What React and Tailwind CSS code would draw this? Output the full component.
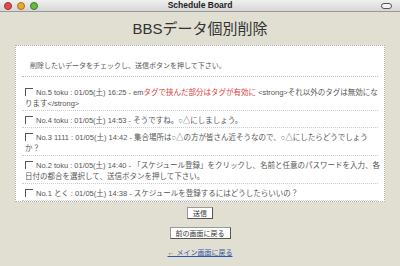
import React from 'react';

const posts = [
  {
    id: 5,
    lines: [
      <>
        No.5 toku : 01/05(土) 16:25 - em<span className="text-[#e03c3c]">タグで挟んだ部分はタグが有効に</span> &lt;strong&gt;それ以外のタグは無効にな
      </>,
      <>ります&lt;/strong&gt;</>,
    ],
  },
  { id: 4, lines: [<>No.4 toku : 01/05(土) 14:53 - そうですね。○△にしましょう。</>] },
  {
    id: 3,
    lines: [
      <>No.3 1111 : 01/05(土) 14:42 - 集合場所は○△の方が皆さん近そうなので、○△にしたらどうでしょう</>,
      <>か？</>,
    ],
  },
  {
    id: 2,
    lines: [
      <>No.2 toku : 01/05(土) 14:40 - 「スケジュール登録」をクリックし、名前と任意のパスワードを入力、各</>,
      <>日付の都合を選択して、送信ボタンを押して下さい。</>,
    ],
  },
  { id: 1, lines: [<>No.1 とく : 01/05(土) 14:38 - スケジュールを登録するにはどうしたらいいの？</>] },
];

const Checkbox = () => (
  <span className="inline-block w-[8px] h-[8px] mr-[3px] align-[-1px] border-t border-l border-[#555]" />
);

const TitleBar = () => (
  <div className="relative h-[12px] flex items-center justify-center bg-[linear-gradient(#f0f0f0,#d6d6d6)] border-b border-[#999]">
    <div className="absolute left-[4px] top-[2px] flex gap-[5px]">
      <span className="w-[8px] h-[8px] rounded-full bg-[#e24b4b] border border-[#933]" />
      <span className="w-[8px] h-[8px] rounded-full bg-[#eda53a] border border-[#a8701a]" />
      <span className="w-[8px] h-[8px] rounded-full bg-[#6cb845] border border-[#3f7a26]" />
    </div>
    <span className="text-[8.5px] font-bold text-[#222] leading-none">Schedule Board</span>
    <span className="absolute right-[8px] top-[3px] w-[11px] h-[6px] rounded-full border border-[#555] bg-[#f2f2f2]" />
  </div>
);

export default function App() {
  return (
    <div
      className="w-[400px] h-[266px] bg-[#e0dfd1] overflow-hidden text-[#555]"
      style={{ fontFamily: '"Liberation Sans", "Noto Sans CJK JP", sans-serif' }}
    >
      <TitleBar />
      <h1 className="h-[33px] flex items-center justify-center text-[15px] text-[#333] leading-none pb-[1px]">
        BBSデータ個別削除
      </h1>

      <div className="mx-[15px] bg-white border border-dotted border-[#aaa] px-[6px]">
        <div className="pt-[14px] pb-[4px] pl-[8px] text-[7px] leading-[12px] border-b border-dotted border-[#bbb]">
          削除したいデータをチェックし、送信ボタンを押して下さい。
        </div>
        <div className="pt-[6px]">
          {posts.map((post) => (
            <div
              key={post.id}
              className="pl-[3px] pt-[4px] pb-[1px] text-[7.5px] leading-[11px] whitespace-nowrap border-b border-dotted border-[#ccc]"
            >
              {post.lines.map((line, j) => (
                <div key={j}>
                  {j === 0 && <Checkbox />}
                  {line}
                </div>
              ))}
            </div>
          ))}
        </div>
      </div>

      <div className="flex flex-col items-center mt-[5px]">
        <button className="h-[12px] px-[5px] bg-white border border-[#999] border-b-[#555] border-r-[#555] text-[7px] leading-none text-[#333]">
          送信
        </button>
        <button className="mt-[8px] h-[12px] px-[5px] bg-white border border-[#999] border-b-[#555] border-r-[#555] text-[7px] leading-none text-[#333]">
          前の画面に戻る
        </button>
        <a href="#" className="mt-[8px] text-[7px] leading-[12px] text-[#3355aa] underline">
          ← メイン画面に戻る
        </a>
      </div>
    </div>
  );
}
